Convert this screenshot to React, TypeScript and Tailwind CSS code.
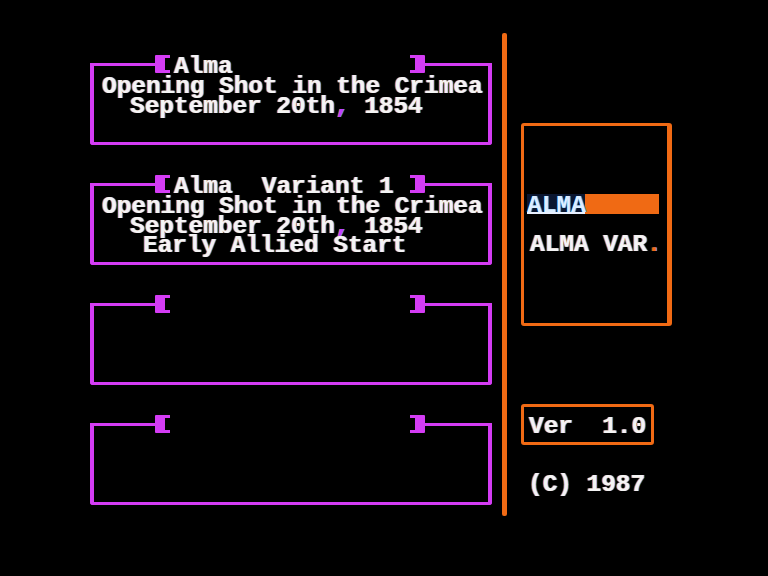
import React from 'react';

// Apple II style scenario picker

const fringe = '[text-shadow:-1px_0_0_rgba(240,120,40,0.85),1px_0_0_rgba(60,160,255,0.85)]';

function LeftTab() {
  return (
    <svg width="15" height="18" viewBox="0 0 15 18" className="shrink-0">
      <path d="M1 0 H15 V3 H10 V15 H15 V18 H1 Q0 18 0 17 V1 Q0 0 1 0 Z" fill="#d43cf4" />
    </svg>
  );
}

function RightTab() {
  return (
    <svg width="15" height="18" viewBox="0 0 15 18" className="shrink-0">
      <path d="M0 0 H14 Q15 0 15 1 V17 Q15 18 14 18 H0 V15 H5 V3 H0 Z" fill="#d43cf4" />
    </svg>
  );
}

type Line = { text: React.ReactNode; indent: string };

function Slot({ title, lines }: { title?: string; lines: Line[] }) {
  return (
    <div className="w-[402px] flex flex-col">
      <div className="flex items-start h-[18px]">
        <div className="w-[65px] h-[3px] mt-[8px] bg-[#d43cf4] rounded-tl-[3px]" />
        <LeftTab />
        <span className={`w-[240px] pl-[4px] leading-[24px] whitespace-pre text-[#f4f4f4] ${fringe}`}>
          {title ?? ''}
        </span>
        <RightTab />
        <div className="flex-1 h-[3px] mt-[8px] bg-[#d43cf4] rounded-tr-[3px]" />
      </div>
      <div className="-mt-[10px] h-[82px] border-x-4 border-b-[3px] border-[#d43cf4] rounded-b-[3px] pt-[14px] flex flex-col leading-[19.5px]">
        {lines.map((l, i) => (
          <span key={i} className={`${l.indent} whitespace-pre text-[#f4f4f4] ${fringe}`}>
            {l.text}
          </span>
        ))}
      </div>
    </div>
  );
}

const dateLine = (
  <>
    September 20th<span className="text-[#c040ff]">,</span> 1854
  </>
);

export default function App() {
  return (
    <div className="w-[768px] h-[576px] bg-black flex overflow-hidden font-['Liberation_Mono',monospace] font-bold text-[24.4px]">
      <div className="pl-[90px] pt-[55px] flex flex-col gap-[30px]">
        <Slot
          title="Alma"
          lines={[
            { text: 'Opening Shot in the Crimea', indent: 'pl-[8px]' },
            { text: dateLine, indent: 'pl-[36px]' },
          ]}
        />
        <Slot
          title="Alma  Variant 1"
          lines={[
            { text: 'Opening Shot in the Crimea', indent: 'pl-[8px]' },
            { text: dateLine, indent: 'pl-[36px]' },
            { text: 'Early Allied Start', indent: 'pl-[49px]' },
          ]}
        />
        <Slot lines={[]} />
        <Slot lines={[]} />
      </div>

      <div className="ml-[10px] mt-[33px] w-[5px] h-[483px] bg-[#f06a14] rounded-[2px]" />

      <div className="ml-[14px] pt-[123px] flex flex-col items-start">
        <div className="w-[151px] h-[203px] border-[3px] border-r-[5px] border-[#f06a14] rounded-[3px] pt-[68px] flex flex-col">
          <div className="ml-[3px] w-[132px] h-[20px] bg-[#f06a14] flex">
            <span className="w-[58px] h-[20px] pt-[3px] bg-[#0a1630] border-b-2 border-[#e8f0ff] leading-[18px] text-[#dceeff] [text-shadow:1px_0_0_rgba(60,160,255,0.9)]">
              ALMA
            </span>
          </div>
          <span className={`mt-[21px] pl-[6px] leading-[19.5px] whitespace-pre text-[#f4f4f4] ${fringe}`}>
            ALMA VAR<span className="text-[#f06a14]">.</span>
          </span>
        </div>

        <div className="mt-[78px] w-[133px] h-[41px] border-[3px] border-[#f06a14] rounded-[3px] pt-[10px] pl-[5px] leading-[19.5px]">
          <span className={`whitespace-pre text-[#f4f4f4] ${fringe}`}>Ver  1.0</span>
        </div>

        <span className={`mt-[30px] pl-[7px] leading-[19.5px] whitespace-pre text-[#f4f4f4] ${fringe}`}>
          (C) 1987
        </span>
      </div>
    </div>
  );
}
